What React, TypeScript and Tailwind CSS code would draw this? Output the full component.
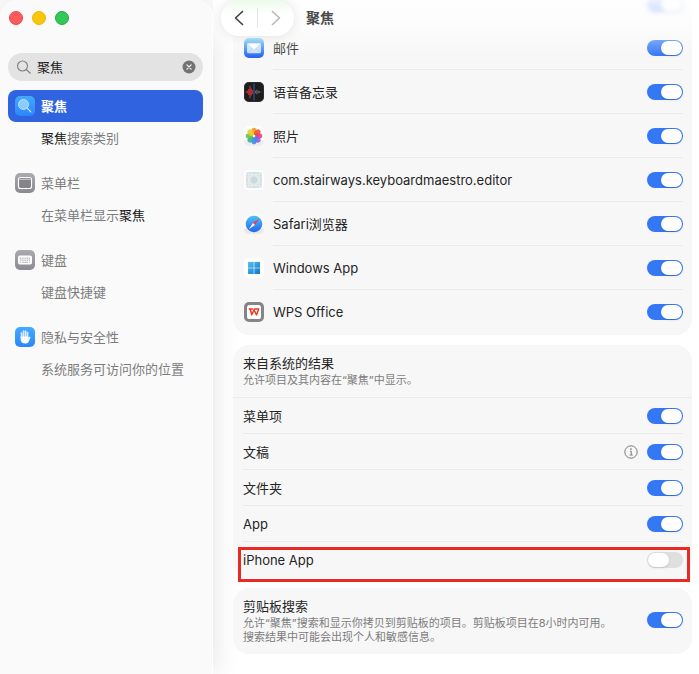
import { useState, type ReactNode } from "react";

function Switch({ id, on = true, label }: { id: string; on?: boolean; label?: string }) {
  const [checked, setChecked] = useState(on);
  return (
    <input
      id={id}
      type="checkbox"
      role="switch"
      aria-label={label}
      checked={checked}
      onChange={(e) => setChecked(e.target.checked)}
      className="flex h-4 w-9 shrink-0 appearance-none items-center rounded-full bg-[#dfdfdf] px-px before:block before:h-3.5 before:w-[21px] before:rounded-full before:bg-white before:shadow-sm before:content-[''] checked:justify-end checked:bg-[#3478f6]"
    />
  );
}

function MailIcon() {
  return (
    <svg viewBox="0 0 20 20" className="size-5">
      <defs>
        <linearGradient id="mail" x1="0" y1="0" x2="0" y2="1">
          <stop offset="0" stopColor="#7fd4f8" />
          <stop offset=".35" stopColor="#3f9cf6" />
          <stop offset="1" stopColor="#2a62f2" />
        </linearGradient>
      </defs>
      <rect width="20" height="20" rx="5" fill="url(#mail)" />
      <rect x="3" y="5.200" width="14" height="10" rx="1.600" fill="#c9defb" />
      <path d="M3.400 14.800 8 10.400M16.600 14.800 12 10.400" stroke="#9fc3f7" strokeWidth=".7" />
      <path d="M3.200 5.800 9 11c.6.5 1.400.5 2 0l5.800-5.200c-.3-.4-.8-.6-1.400-.6H4.600c-.6 0-1.100.2-1.400.6Z" fill="#fff" stroke="#a8c9f8" strokeWidth=".5" />
    </svg>
  );
}

function VoiceMemosIcon() {
  return (
    <svg viewBox="0 0 20 20" className="size-5">
      <rect width="20" height="20" rx="5" fill="#1d1d1f" />
      <rect x=".4" y=".4" width="19.200" height="19.200" rx="4.600" fill="none" stroke="#3c3c3e" strokeWidth=".6" />
      <path d="M2 9.400v1.200M3.400 8.500v3M4.700 7v6M6 3.800v12.400M7.300 6.500v7M8.500 8v4" stroke="#a82f2b" strokeWidth="1.400" />
      <path d="M10 1.500v17" stroke="#27538a" strokeWidth="1.300" />
      <path d="M11.600 8.700v2.600M12.900 7.700v4.600M14.200 8.700v2.600M15.500 9.300v1.400M17 9.600v.8" stroke="#707073" strokeWidth="1" />
    </svg>
  );
}

const petals = [
  { angle: 0, color: "#fb961c" },
  { angle: 45, color: "#f4502f" },
  { angle: 90, color: "#e5407a" },
  { angle: 135, color: "#8b5fd6" },
  { angle: 180, color: "#3f86f0" },
  { angle: 225, color: "#2db1a0" },
  { angle: 270, color: "#64c24a" },
  { angle: 315, color: "#e7cf2c" },
];

function PhotosIcon() {
  return (
    <svg viewBox="0 0 20 20" className="size-5">
      <rect width="20" height="20" rx="5" fill="#fdfdfd" />
      <path d="M0 14.500h20v.5a5 5 0 0 1-5 5H5a5 5 0 0 1-5-5Z" fill="#ececec" />
      {petals.map((p) => (
        <ellipse key={p.angle} cx="10" cy="5.400" rx="2.700" ry="3.700" fill={p.color} fillOpacity=".9" transform={`rotate(${p.angle} 10 10)`} />
      ))}
      <circle cx="10" cy="10" r="1.300" fill="#fff6e8" />
    </svg>
  );
}

function PlaceholderAppIcon() {
  return (
    <svg viewBox="0 0 20 20" className="size-5">
      <rect width="20" height="20" rx="5" fill="#fdfdfd" />
      <rect x="2" y="2" width="16" height="16" rx="3" fill="#d6e0e3" />
      <g fill="none" stroke="#f3f7f8" strokeWidth=".6">
        <path d="M7 2v16M13 2v16M2 7h16M2 13h16M4.500 2v16M15.500 2v16M2 4.500h16M2 15.500h16" strokeOpacity=".7" />
        <circle cx="10" cy="10" r="5" />
      </g>
      <circle cx="10" cy="10" r="3.200" fill="#ccd8dc" />
    </svg>
  );
}

function SafariIcon() {
  return (
    <svg viewBox="0 0 20 20" className="size-5">
      <defs>
        <linearGradient id="safari" x1="0" y1="0" x2="0" y2="1">
          <stop offset="0" stopColor="#4fc0fb" />
          <stop offset="1" stopColor="#2466ee" />
        </linearGradient>
      </defs>
      <rect width="20" height="20" rx="5" fill="#fafafa" />
      <path d="M0 14.500h20v.5a5 5 0 0 1-5 5H5a5 5 0 0 1-5-5Z" fill="#e9e9ea" />
      <circle cx="10" cy="10" r="8.300" fill="url(#safari)" />
      <path d="M15.200 4.800 9 9l2 2Z" fill="#fb3a35" />
      <path d="M4.800 15.200 11 11 9 9Z" fill="#f4f4f6" />
    </svg>
  );
}

function WindowsIcon() {
  return (
    <svg viewBox="0 0 20 20" className="size-5">
      <defs>
        <linearGradient id="win" gradientUnits="userSpaceOnUse" x1="4" y1="4" x2="16" y2="16">
          <stop offset="0" stopColor="#4fc3ee" />
          <stop offset="1" stopColor="#1476cc" />
        </linearGradient>
      </defs>
      <rect width="20" height="20" rx="5" fill="#fff" />
      <path d="M4 4h5.700v5.700H4ZM10.300 4H16v5.700h-5.700ZM4 10.300h5.700V16H4ZM10.300 10.300H16V16h-5.700Z" fill="url(#win)" />
    </svg>
  );
}

function WpsIcon() {
  return (
    <svg viewBox="0 0 20 20" className="size-5">
      <rect width="20" height="20" rx="5" fill="#858585" />
      <rect x="3" y="3" width="14" height="14" rx="2.600" fill="#fff" />
      <path d="M5.200 7h3.300M6.200 7l1.600 5.800L10.500 7h4.300l-2.300 5.800L10.300 8.500" fill="none" stroke="#ea3a25" strokeWidth="1.500" strokeLinejoin="round" strokeLinecap="round" />
    </svg>
  );
}

function SpotlightIcon() {
  return (
    <svg viewBox="0 0 20 20" className="size-5">
      <defs>
        <linearGradient id="spot" x1="0" y1="0" x2="0" y2="1">
          <stop offset="0" stopColor="#45aaff" />
          <stop offset="1" stopColor="#2b86fb" />
        </linearGradient>
      </defs>
      <rect width="20" height="20" rx="5" fill="url(#spot)" />
      <circle cx="8.500" cy="8.500" r="5" fill="#8ccbff" stroke="#c4e4ff" strokeWidth=".9" />
      <path d="m12.200 12.200 3.600 3.600" stroke="#d9eeff" strokeWidth="1.100" strokeLinecap="round" />
    </svg>
  );
}

function GrayTile({ children }: { children: ReactNode }) {
  return (
    <svg viewBox="0 0 20 20" className="size-5">
      <defs>
        <linearGradient id="gray" x1="0" y1="0" x2="0" y2="1">
          <stop offset="0" stopColor="#abaaaf" />
          <stop offset="1" stopColor="#8b8a90" />
        </linearGradient>
      </defs>
      <rect width="20" height="20" rx="5" fill="url(#gray)" />
      {children}
    </svg>
  );
}

function MenuBarIcon() {
  return (
    <GrayTile>
      <rect x="3.500" y="4.500" width="13" height="11" rx="2" fill="#85848a" stroke="#fff" strokeWidth="1.100" />
      <path d="M4.500 6.400h11" stroke="#c4c4c8" strokeWidth="1.200" />
    </GrayTile>
  );
}

function KeyboardIcon() {
  return (
    <GrayTile>
      <rect x="3" y="5.500" width="14" height="9" rx="1.700" fill="#fff" />
      <path d="M4.800 8.200h10.400M4.800 10.200h10.400" stroke="#b3b2b7" strokeWidth="1.200" strokeDasharray="1.200 .6" />
      <path d="M4.800 12.200h1.300M7 12.200h6M13.900 12.200h1.300" stroke="#b3b2b7" strokeWidth="1.100" />
    </GrayTile>
  );
}

function HandIcon() {
  return (
    <svg viewBox="0 0 20 20" className="size-5">
      <rect width="20" height="20" rx="5" fill="url(#spot)" />
      <g stroke="#d5eaff" strokeWidth="1.700" strokeLinecap="round">
        <path d="M6.500 6v5M8.500 4.200V10M10.600 4v6M12.600 5.600v5" />
      </g>
      <path d="M5.650 9.500h7.800v1.700l.8-1.200c.5-.7 1.500-.3 1.200.6l-1.700 3.800c-.6 1.400-1.700 2.200-3.500 2.200-2.800 0-4.600-1.700-4.600-4.400Z" fill="#fff" />
    </svg>
  );
}

function NavItem({ icon, children }: { icon?: ReactNode; children: ReactNode }) {
  return (
    <li>
      <a href="#" className="flex h-8 items-center gap-1.5 px-[7px] text-[#7c7c7c]">
        <span className="size-5 shrink-0">{icon}</span>
        <span>{children}</span>
      </a>
    </li>
  );
}

function Match({ children }: { children: ReactNode }) {
  return <mark className="bg-transparent text-[#161616]">{children}</mark>;
}

function Sidebar() {
  const [query, setQuery] = useState("聚焦");
  return (
    <aside className="w-[213px] shrink-0 rounded-t-2xl border-r border-white bg-[#fafafa] pr-[9px] pl-2 shadow-[0_0_28px_rgba(0,0,0,0.12)]">
      <div className="flex gap-[9px] pt-[11px] pl-px">
        <button aria-label="关闭" className="size-3.5 rounded-full border border-[#f04344] bg-[#ff5b5c]" />
        <button aria-label="最小化" className="size-3.5 rounded-full border border-[#eab70a] bg-[#fbc509]" />
        <button aria-label="缩放" className="size-3.5 rounded-full border border-[#1fae3c] bg-[#34c759]" />
      </div>
      <div className="mt-7 flex h-7 items-center gap-[5px] rounded-full bg-[#e3e3e3] pr-[7px] pl-2">
        <svg viewBox="0 0 16 16" className="size-4 shrink-0" fill="none" stroke="#858585" strokeWidth="1.200" strokeLinecap="round">
          <circle cx="6.500" cy="7" r="5" />
          <path d="m10.300 10.500 4 3.700" />
        </svg>
        <input
          aria-label="搜索"
          value={query}
          onChange={(e) => setQuery(e.target.value)}
          className="min-w-0 flex-1 bg-transparent text-[#1d1d1d] outline-none"
        />
        <button aria-label="清除" onClick={() => setQuery("")}>
          <svg viewBox="0 0 14 14" className="size-3.5">
            <circle cx="7" cy="7" r="6.500" fill="#737373" />
            <path d="m4.900 4.900 4.200 4.200M9.100 4.900 4.900 9.100" stroke="#f2f2f2" strokeWidth="1.300" strokeLinecap="round" />
          </svg>
        </button>
      </div>
      <nav className="mt-[9px] flex flex-col gap-[13px]">
        <ul>
          <li>
            <a href="#" aria-current="page" className="flex h-8 items-center gap-1.5 rounded-lg bg-[#2f63e0] px-[7px] font-bold text-white">
              <SpotlightIcon />
              <span>聚焦</span>
            </a>
          </li>
          <NavItem>
            <Match>聚焦</Match>搜索类别
          </NavItem>
        </ul>
        <ul>
          <NavItem icon={<MenuBarIcon />}>菜单栏</NavItem>
          <NavItem>
            在菜单栏显示<Match>聚焦</Match>
          </NavItem>
        </ul>
        <ul>
          <NavItem icon={<KeyboardIcon />}>键盘</NavItem>
          <NavItem>键盘快捷键</NavItem>
        </ul>
        <ul>
          <NavItem icon={<HandIcon />}>隐私与安全性</NavItem>
          <NavItem>系统服务可访问你的位置</NavItem>
        </ul>
      </nav>
    </aside>
  );
}

const apps = [
  { id: "mail", name: "邮件", icon: <MailIcon /> },
  { id: "memos", name: "语音备忘录", icon: <VoiceMemosIcon /> },
  { id: "photos", name: "照片", icon: <PhotosIcon /> },
  { id: "maestro", name: "com.stairways.keyboardmaestro.editor", icon: <PlaceholderAppIcon /> },
  { id: "safari", name: "Safari浏览器", icon: <SafariIcon /> },
  { id: "windows", name: "Windows App", icon: <WindowsIcon /> },
  { id: "wps", name: "WPS Office", icon: <WpsIcon /> },
];

const results = [
  { id: "menu", name: "菜单项" },
  { id: "docs", name: "文稿", info: true },
  { id: "folders", name: "文件夹" },
  { id: "app", name: "App" },
];

function InfoButton() {
  return (
    <button aria-label="详细信息" className="mr-[9px]">
      <svg viewBox="0 0 14 14" className="size-3.5" fill="none" stroke="#6e6e6e">
        <circle cx="7" cy="7" r="6.200" strokeWidth=".9" />
        <path d="M6 6.200h1.200v3.600M5.700 10h3" strokeWidth=".9" />
        <circle cx="7" cy="4.100" r=".8" fill="#6e6e6e" stroke="none" />
      </svg>
    </button>
  );
}

function Header() {
  return (
    <header className="pointer-events-none absolute inset-x-0 top-0 flex h-14 items-start bg-linear-to-b from-white/90 via-white/60 to-transparent pl-2">
      <div className="pointer-events-auto flex h-9 w-[73px] items-center rounded-full bg-white bg-linear-to-b from-[#edfbed] to-white to-40% shadow-[0_0_12px_rgba(0,0,0,0.1)]">
        <button aria-label="返回" className="flex flex-1 justify-center">
          <svg viewBox="0 0 10 16" className="h-4 w-2.5" fill="none" stroke="#444" strokeWidth="1.700" strokeLinecap="round" strokeLinejoin="round">
            <path d="M8.500 1.500 1.500 8l7 6.500" />
          </svg>
        </button>
        <span className="h-5 w-px bg-[#e6e6e6]" />
        <button aria-label="前进" className="flex flex-1 justify-center">
          <svg viewBox="0 0 10 16" className="h-4 w-2.5" fill="none" stroke="#b9b9b9" strokeWidth="1.700" strokeLinecap="round" strokeLinejoin="round">
            <path d="m1.500 1.500 7 6.500-7 6.500" />
          </svg>
        </button>
      </div>
      <h1 className="ml-3 flex h-9 items-center text-[14px] font-bold text-[#4a4a4a]">聚焦</h1>
    </header>
  );
}

export default function App() {
  return (
    <div className="flex min-h-screen bg-white font-['Inter','Noto_Sans_CJK_SC',sans-serif] text-[13px] leading-5 text-[#252525]" lang="zh-CN">
      <Sidebar />
      <main className="relative flex min-w-0 flex-1 flex-col gap-2.5 pr-[7px] pb-5 pl-5">
        <section className="rounded-b-2xl bg-[#f7f7f7] pb-px">
          <div className="flex h-[26px] items-end justify-end overflow-hidden pr-[9px]">
            <div className="flex h-11 items-center blur-[2px]">
              <Switch id="messages" label="信息" />
            </div>
          </div>
          {apps.map((a) => (
            <div key={a.id} className="group flex h-11 items-center gap-[9px] pr-[9px] pl-[11px]">
              {a.icon}
              <div className="flex h-11 flex-1 items-center justify-between border-b border-[#ebebeb] group-last:border-transparent">
                <label htmlFor={a.id}>{a.name}</label>
                <Switch id={a.id} />
              </div>
            </div>
          ))}
        </section>

        <section className="rounded-2xl bg-[#f7f7f7]">
          <div className="border-b border-[#ebebeb] px-2.5 pt-2 pb-2.5">
            <h2>来自系统的结果</h2>
            <p className="text-[11px] leading-3.5 text-[#7c7c7c]">允许项目及其内容在“聚焦”中显示。</p>
          </div>
          {results.map((r) => (
            <div key={r.id} className="mr-[9px] ml-2.5 flex h-9 items-center border-b border-[#ebebeb]">
              <label htmlFor={r.id} className="flex-1">{r.name}</label>
              {r.info && <InfoButton />}
              <Switch id={r.id} />
            </div>
          ))}
          <div className="relative flex h-9 items-center justify-between pr-[9px] pl-2.5">
            <label htmlFor="iphone">iPhone App</label>
            <Switch id="iphone" on={false} />
            <div className="pointer-events-none absolute top-[5px] right-0.5 -bottom-1 left-[5px] border-3 border-[#e92a24]" />
          </div>
        </section>

        <section className="flex items-center justify-between gap-4 rounded-2xl bg-[#f7f7f7] pt-2 pr-[9px] pb-2.5 pl-2.5">
          <div>
            <label htmlFor="clipboard">剪贴板搜索</label>
            <p className="text-[11px] leading-3.5 text-[#7c7c7c]">
              允许“聚焦”搜索和显示你拷贝到剪贴板的项目。剪贴板项目在8小时内可用。
              <br />
              搜索结果中可能会出现个人和敏感信息。
            </p>
          </div>
          <Switch id="clipboard" />
        </section>
        <Header />
      </main>
    </div>
  );
}
